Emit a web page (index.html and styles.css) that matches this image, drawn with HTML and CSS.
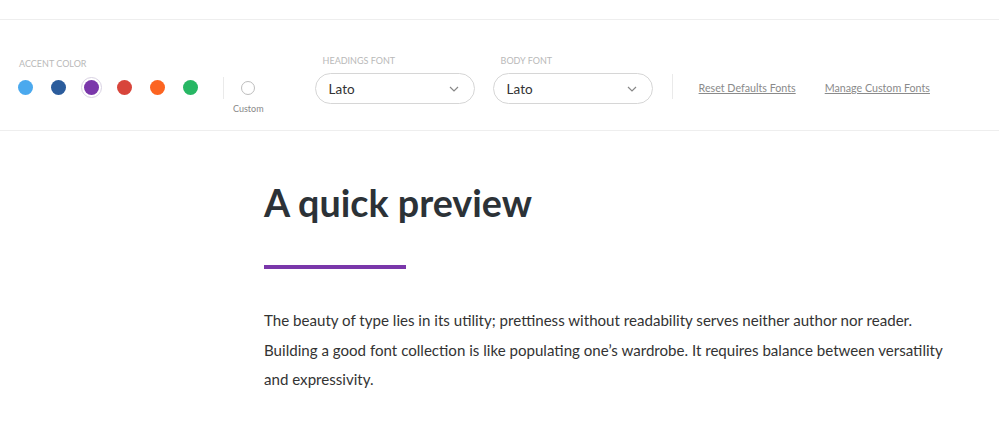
FILE: index.html
```html
<!DOCTYPE html>
<html>
<head>
<meta charset="utf-8">
<link rel="stylesheet" href="styles.css">
</head>
<body>
<div class="topspace"></div>
<div class="toolbar">
  <div class="group accent">
    <div class="label">ACCENT COLOR</div>
    <div class="swatches">
      <span class="dot c1"></span>
      <span class="dot c2"></span>
      <span class="dot c3 selected"></span>
      <span class="dot c4"></span>
      <span class="dot c5"></span>
      <span class="dot c6"></span>
    </div>
  </div>
  <div class="vdiv"></div>
  <div class="custom">
    <span class="ring"></span>
    <span class="custom-label">Custom</span>
  </div>
  <div class="group font-group">
    <div class="label">HEADINGS FONT</div>
    <div class="select"><span>Lato</span>
      <svg class="chev" width="10" height="6" viewBox="0 0 10 6"><path d="M1 1l4 4 4-4" fill="none" stroke="#888" stroke-width="1.2"/></svg>
    </div>
  </div>
  <div class="group font-group body-font">
    <div class="label">BODY FONT</div>
    <div class="select"><span>Lato</span>
      <svg class="chev" width="10" height="6" viewBox="0 0 10 6"><path d="M1 1l4 4 4-4" fill="none" stroke="#888" stroke-width="1.2"/></svg>
    </div>
  </div>
  <div class="vdiv vdiv2"></div>
  <a class="link" href="#">Reset Defaults Fonts</a>
  <a class="link link2" href="#">Manage Custom Fonts</a>
</div>
<main class="preview">
  <h1>A quick preview</h1>
  <div class="bar"></div>
  <p>The beauty of type lies in its utility; prettiness without readability serves neither author nor reader. Building a good font collection is like populating one’s wardrobe. It requires balance between versatility and expressivity.</p>
</main>
</body>
</html>
```
FILE: styles.css
```css
* { box-sizing: border-box; }
html, body { margin: 0; padding: 0; background: #fff; }
body { font-family: Lato, "Open Sans", sans-serif; color: #333; }

.topspace { height: 20px; border-bottom: 1.5px solid #eeeeee; }

.toolbar {
  height: 111px;
  border-bottom: 1.5px solid #eeeeee;
  display: flex;
  align-items: flex-start;
  padding-left: 18px;
}

.label {
  font-size: 9px;
  color: #b9b9b9;
  line-height: 10px;
}

.accent { padding-top: 39px; }
.accent .label { margin-left: 1px; }
.swatches { display: flex; gap: 18px; margin-top: 11px; align-items: center; }
.dot { width: 15px; height: 15px; border-radius: 50%; display: block; position: relative; }
.c1 { background: #4ba9ee; }
.c2 { background: #2b5c9c; }
.c3 { background: #7a37aa; }
.c4 { background: #d8453b; }
.c5 { background: #fc6421; }
.c6 { background: #27b764; }
.selected::after {
  content: "";
  position: absolute;
  left: -3px; top: -3px; right: -3px; bottom: -3px;
  border: 1px solid #d9d2e3;
  border-radius: 50%;
}

.vdiv { width: 1px; height: 22px; background: #eaeaea; margin-top: 57px; margin-left: 25px; }

.custom { display: flex; flex-direction: column; align-items: center; margin-left: 9px; padding-top: 61px; }
.ring { width: 14px; height: 14px; border: 1px solid #bdbdbd; border-radius: 50%; display: block; }
.custom-label { font-size: 9px; color: #888; margin-top: 9px; line-height: 10px; }

.font-group { padding-top: 36px; margin-left: 51px; }
.font-group .label { margin-left: 8px; }
.body-font { margin-left: 18px; }
.select {
  margin-top: 7px;
  width: 160px;
  height: 31px;
  border: 1px solid #d6d6d6;
  border-radius: 16px;
  display: flex;
  align-items: center;
  justify-content: space-between;
  padding: 0 15px 0 13px;
  font-size: 13.5px;
  color: #333;
}
.chev { margin-top: 1px; }

.vdiv2 { margin-top: 54px; height: 25px; margin-left: 19px; }

.link {
  font-size: 10.7px;
  color: #8a8a8a;
  text-decoration: underline;
  margin-top: 62px;
  margin-left: 26px;
  line-height: 12px;
}
.link2 { margin-left: 29px; }

.preview { padding-left: 264px; padding-right: 50px; }
.preview h1 {
  font-size: 37.7px;
  font-weight: 700;
  color: #2c3237;
  margin: 48px 0 0 0;
  line-height: 48px;
}
.bar { width: 142px; height: 4px; background: #7a37aa; margin-top: 38px; }
.preview p {
  font-size: 15.1px;
  line-height: 29.5px;
  color: #333;
  margin: 37px 0 0 0;
  max-width: 685px;
}
```
